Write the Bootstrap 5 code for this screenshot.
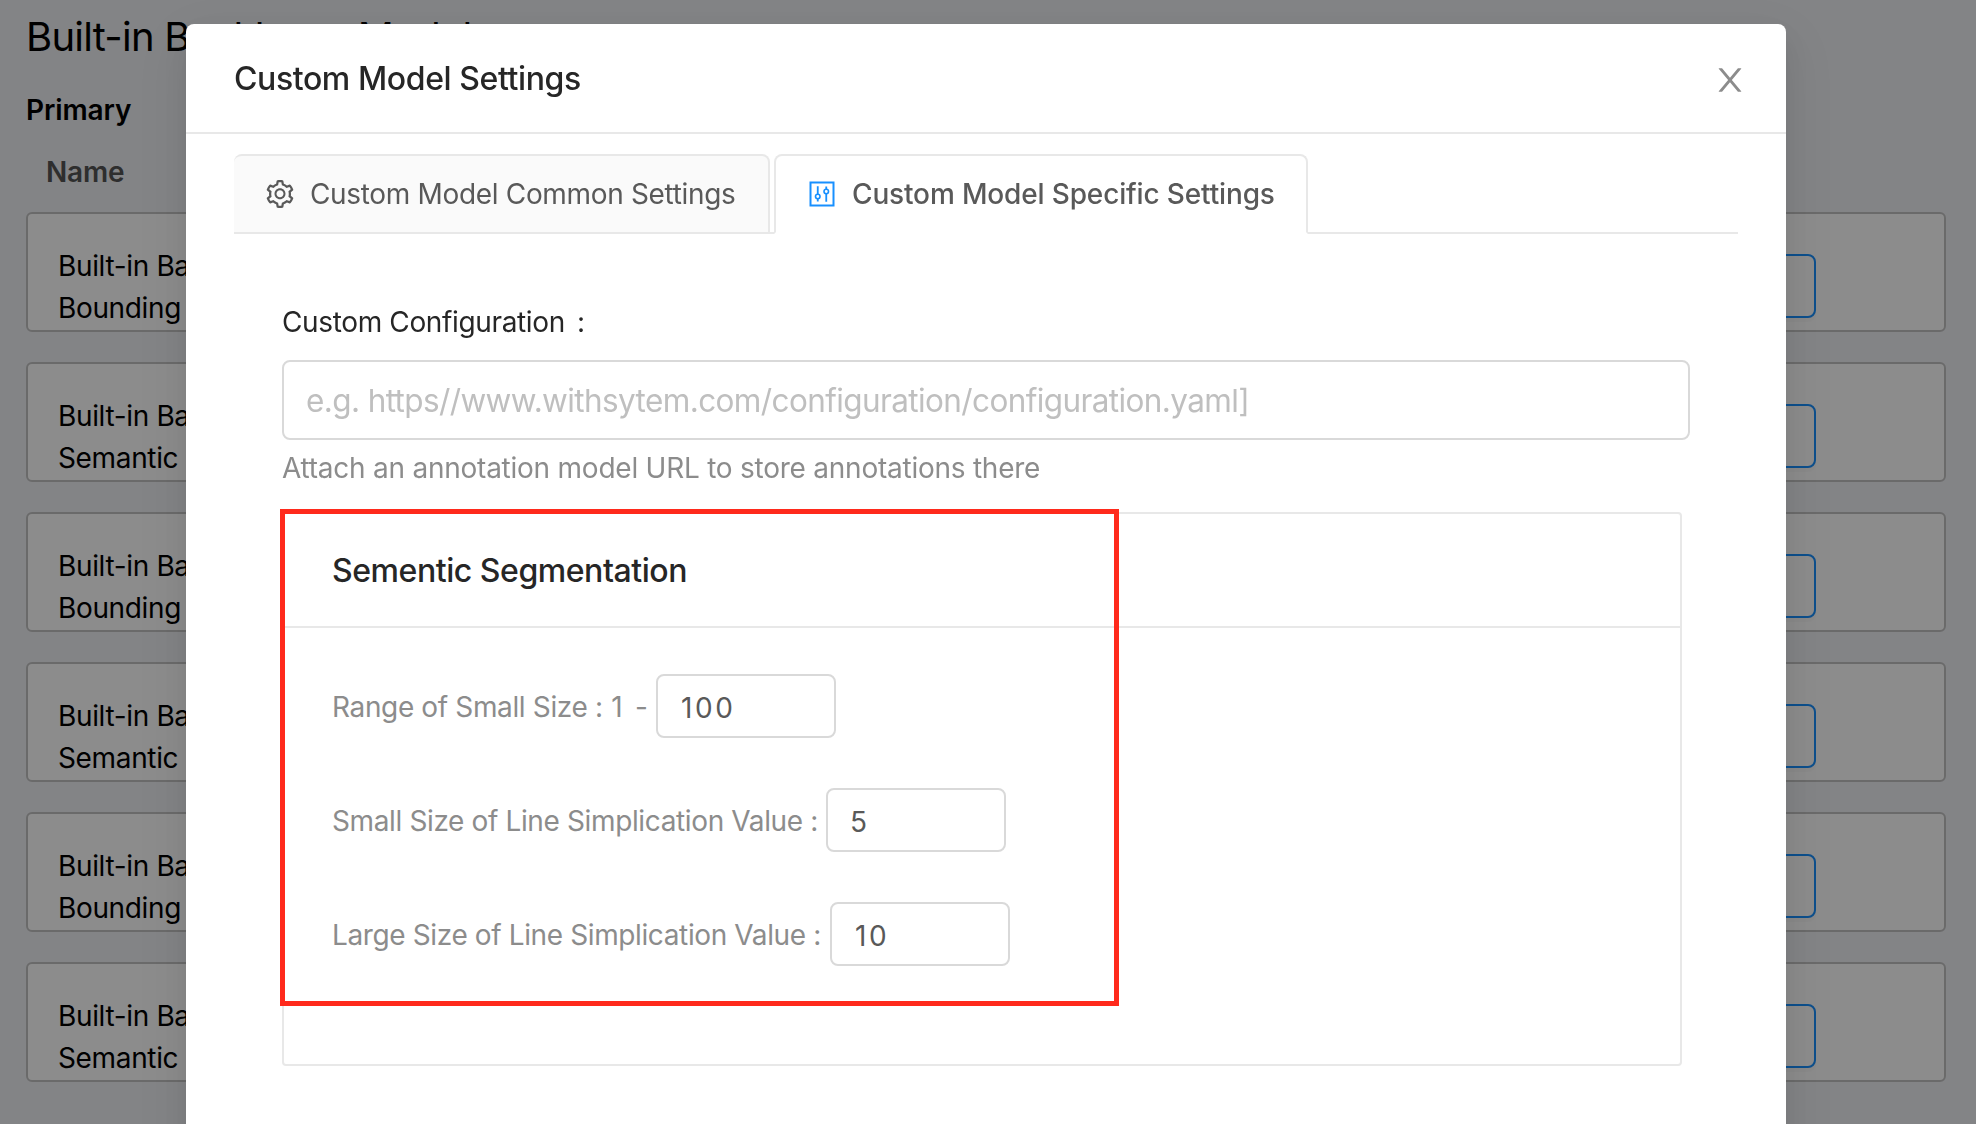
<!DOCTYPE html>
<html lang="en">
<head>
<meta charset="utf-8">
<meta name="viewport" content="width=device-width, initial-scale=1">
<title>Custom Model Settings</title>
<link href="https://cdn.jsdelivr.net/npm/bootstrap@5.3.0/dist/css/bootstrap.min.css" rel="stylesheet">
<style>
  html, body { height: 100%; overflow: hidden; }
  body { font-family: Inter, "Liberation Sans", sans-serif; font-size: 28px; line-height: 42px; color: #000; background: #eef0f4; }

  /* Page behind the dialog */
  .page { padding: 7px 30px 0 26px; }
  .page-title { font-size: 40px; line-height: 60px; font-weight: 400; letter-spacing: -.75px; margin: 0 0 22px; }
  .page-group { font-size: 28px; line-height: 42px; font-weight: 600; letter-spacing: -.1px; margin: 0 0 20px; }
  .page-head { font-weight: 600; color: #555; padding-left: 20px; margin-bottom: 19px; letter-spacing: -.2px; }
  .model-row { height: 120px; border: 2px solid #c2c2c2; border-radius: 6px; margin-bottom: 30px; padding: 31px 128px 0 30px; line-height: 42px; background: #fff; }
  .model-name { width: 330px; letter-spacing: -.35px; }
  .model-row .btn { width: 180px; height: 64px; margin-top: 9px; border: 2px solid #1890ff; border-radius: 8px; background: #fff; box-shadow: 0 4px 0 rgba(0,0,0,.02); }

  /* Dialog */
  .modal-backdrop { --bs-backdrop-opacity: .45; }
  .modal { padding-right: 4px; overflow: hidden; }
  .modal-dialog { max-width: 1600px; margin: 24px auto 0; }
  .modal-content { height: 1200px; border: 0; border-radius: 8px; color: #262626; box-shadow: 0 6px 12px -8px rgba(0,0,0,.12), 0 12px 32px rgba(0,0,0,.08), 0 18px 56px 16px rgba(0,0,0,.05); }
  .modal-header { height: 110px; padding: 4px 40px 0 48px; border-bottom: 2px solid #e8e8e8; }
  .modal-title { margin-bottom: 2px; font-size: 32px; line-height: 48px; font-weight: 500; letter-spacing: -.4px; }
  .close-x { display: flex; padding: 0; border: 0; background: none; color: #8c8c8c; }
  .modal-body { padding: 20px 48px 0; }

  .nav-tabs { height: 80px; gap: 4px; border-bottom: 2px solid #e8e8e8; }
  .nav-tabs .nav-link { height: 80px; gap: 16px; padding: 0 0 0 32px; border: 2px solid #e8e8e8; border-radius: 8px 8px 0 0; margin-bottom: -2px; color: #595959; background: #fafafa; }
  .nav-tabs .tab-common { width: 536px; border-left: 0; letter-spacing: -.33px; }
  .nav-tabs .tab-specific, .nav-tabs .tab-specific.active { width: 534px; font-weight: 500; letter-spacing: -.15px; color: #595959; background: #fff; border-color: #e8e8e8 #e8e8e8 #fff; }
  .tab-specific svg { color: #1890ff; }

  .tab-pane-body { padding: 67px 48px 0; }
  .form-label { margin: 0 0 17px; letter-spacing: -.36px; }
  .form-control { border: 2px solid #d9d9d9; border-radius: 8px; color: #595959; }
  .url-field { height: 80px; padding: 0 22px; font-size: 31.5px; letter-spacing: -.61px; }
  .url-field::placeholder { color: #bfbfbf; opacity: 1; }
  .form-text { margin: 7px 0 23px; font-size: 28px; color: #8c8c8c; letter-spacing: -.24px; }

  .seg-card { height: 554px; margin-right: 8px; border: 2px solid #e8e8e8; border-radius: 4px; background: #fff; }
  .seg-card .card-header { height: 114px; padding: 1px 48px 0; font-size: 32px; font-weight: 500; letter-spacing: -.45px; background: #fff; border-bottom: 2px solid #e8e8e8; }
  .seg-card .card-body { padding: 46px 48px 0; gap: 50px; color: #8c8c8c; }
  .field-row { gap: 7px; }
  .field-row label { padding-top: 2px; }
  .field-row .form-control { width: 180px; height: 64px; padding: 4px 22px 0; font-size: 28px; letter-spacing: .9px; }
  .field-row .wide-num { padding-left: 23px; letter-spacing: 2.6px; }
  .lbl-range { width: 317px; letter-spacing: -.36px; }
  .range-from { padding-left: 1px; letter-spacing: 2.2px; }
  .lbl-small { width: 487px; letter-spacing: -.37px; }
  .lbl-large { width: 491px; letter-spacing: -.38px; }
  .highlight { position: absolute; left: -4px; top: -5px; width: 839px; height: 497px; border: 5px solid #ff2a1c; pointer-events: none; }
</style>
</head>
<body>
<main class="page">
  <h1 class="page-title">Built-in Backbone Models</h1>
  <h2 class="page-group">Primary</h2>
  <div class="page-head">Name</div>
  <div class="model-row d-flex justify-content-between"><div class="model-name">Built-in Backbone<br>Bounding Box</div><button class="btn" type="button" aria-label="Settings"></button></div>
  <div class="model-row d-flex justify-content-between"><div class="model-name">Built-in Backbone<br>Semantic</div><button class="btn" type="button" aria-label="Settings"></button></div>
  <div class="model-row d-flex justify-content-between"><div class="model-name">Built-in Backbone<br>Bounding Box</div><button class="btn" type="button" aria-label="Settings"></button></div>
  <div class="model-row d-flex justify-content-between"><div class="model-name">Built-in Backbone<br>Semantic</div><button class="btn" type="button" aria-label="Settings"></button></div>
  <div class="model-row d-flex justify-content-between"><div class="model-name">Built-in Backbone<br>Bounding Box</div><button class="btn" type="button" aria-label="Settings"></button></div>
  <div class="model-row d-flex justify-content-between"><div class="model-name">Built-in Backbone<br>Semantic</div><button class="btn" type="button" aria-label="Settings"></button></div>
</main>

<div class="modal-backdrop show"></div>
<div class="modal show d-block" tabindex="-1" role="dialog" aria-labelledby="dlgTitle">
  <div class="modal-dialog">
    <div class="modal-content">
      <div class="modal-header d-flex align-items-center justify-content-between">
        <h5 class="modal-title" id="dlgTitle">Custom Model Settings</h5>
        <button class="close-x" type="button" aria-label="Close">
          <svg width="32" height="32" viewBox="64 64 896 896" fill="currentColor"><path d="M563.8 512l262.5-312.9c4.4-5.2.7-13.1-6.1-13.1h-79.8c-4.7 0-9.2 2.1-12.3 5.7L511.6 449.8 295.1 191.7c-3-3.6-7.5-5.7-12.3-5.7H203c-6.8 0-10.5 7.9-6.1 13.1L459.4 512 196.9 824.9A7.95 7.95 0 0 0 203 838h79.8c4.7 0 9.2-2.1 12.3-5.7l216.5-258.1 216.5 258.1c3 3.6 7.5 5.7 12.3 5.7h79.8c6.8 0 10.5-7.9 6.1-13.1L563.8 512z"/></svg>
        </button>
      </div>
      <div class="modal-body">
        <ul class="nav nav-tabs">
          <li class="nav-item">
            <button class="nav-link tab-common d-flex align-items-center" type="button">
              <svg width="28" height="28" viewBox="64 64 896 896" fill="currentColor"><path d="M924.8 625.7l-65.5-56c3.1-19 4.7-38.4 4.7-57.8s-1.6-38.8-4.7-57.8l65.5-56a32.03 32.03 0 0 0 9.3-35.2l-.9-2.6a443.74 443.74 0 0 0-79.7-137.9l-1.8-2.1a32.12 32.12 0 0 0-35.1-9.5l-81.3 28.9c-30-24.6-63.5-44-99.7-57.6l-15.7-85a32.05 32.05 0 0 0-25.8-25.7l-2.7-.5c-52.1-9.4-106.9-9.4-159 0l-2.7.5a32.05 32.05 0 0 0-25.8 25.7l-15.8 85.4a351.86 351.86 0 0 0-99 57.4l-81.9-29.1a32 32 0 0 0-35.1 9.5l-1.8 2.1a446.02 446.02 0 0 0-79.7 137.9l-.9 2.6c-4.5 12.5-.8 26.5 9.3 35.2l66.3 56.6c-3.1 18.8-4.6 38-4.6 57.1 0 19.2 1.5 38.4 4.6 57.1L99 625.5a32.03 32.03 0 0 0-9.3 35.2l.9 2.6c18.1 50.4 44.9 96.9 79.7 137.9l1.8 2.1a32.12 32.12 0 0 0 35.1 9.5l81.9-29.1c29.8 24.5 63.1 43.9 99 57.4l15.8 85.4a32.05 32.05 0 0 0 25.8 25.7l2.7.5a449.4 449.4 0 0 0 159 0l2.7-.5a32.05 32.05 0 0 0 25.8-25.7l15.7-85a350 350 0 0 0 99.7-57.6l81.3 28.9a32 32 0 0 0 35.1-9.5l1.8-2.1c34.8-41.1 61.6-87.5 79.7-137.9l.9-2.6c4.5-12.3.8-26.3-9.3-35zM788.3 465.9c2.5 15.1 3.8 30.6 3.8 46.1s-1.3 31-3.8 46.1l-6.6 40.1 74.7 63.9a370.03 370.03 0 0 1-42.6 73.6L721 702.8l-31.4 25.8c-23.9 19.6-50.5 35-79.3 45.8l-38.1 14.3-17.9 97a377.5 377.5 0 0 1-85 0l-17.9-97.2-37.8-14.5c-28.5-10.8-55-26.2-78.7-45.7l-31.4-25.9-93.4 33.2c-17-22.9-31.2-47.6-42.6-73.6l75.5-64.5-6.5-40c-2.4-14.9-3.7-30.3-3.7-45.5 0-15.3 1.2-30.6 3.7-45.5l6.5-40-75.5-64.5c11.3-26.1 25.6-50.7 42.6-73.6l93.4 33.2 31.4-25.9c23.7-19.5 50.2-34.9 78.7-45.7l37.9-14.3 17.9-97.2c28.1-3.2 56.8-3.2 85 0l17.9 97 38.1 14.3c28.7 10.8 55.4 26.2 79.3 45.8l31.4 25.8 92.8-32.9c17 22.9 31.2 47.6 42.6 73.6L781.8 426l6.5 39.9zM512 326c-97.2 0-176 78.8-176 176s78.8 176 176 176 176-78.8 176-176-78.8-176-176-176zm79.2 255.2A111.6 111.6 0 0 1 512 614c-29.9 0-58-11.7-79.2-32.8A111.6 111.6 0 0 1 400 502c0-29.9 11.7-58 32.8-79.2C454 401.6 482.1 390 512 390c29.9 0 58 11.6 79.2 32.8A111.6 111.6 0 0 1 624 502c0 29.9-11.7 58-32.8 79.2z"/></svg>
              <span>Custom Model Common Settings</span>
            </button>
          </li>
          <li class="nav-item">
            <button class="nav-link tab-specific active d-flex align-items-center" type="button">
              <svg width="28" height="28" viewBox="64 64 896 896" fill="none" stroke="currentColor" stroke-width="64"><rect x="144" y="144" width="736" height="736"/><path d="M376 264v256M376 660v90M648 274v90M648 500v260" stroke-width="58"/><circle cx="376" cy="590" r="72" stroke-width="52"/><circle cx="648" cy="432" r="72" stroke-width="52"/></svg>
              <span>Custom Model Specific Settings</span>
            </button>
          </li>
        </ul>
        <div class="tab-pane-body">
          <label class="form-label d-block" for="cfg">Custom Configuration<span class="ms-2 ps-1">:</span></label>
          <input class="form-control url-field" id="cfg" type="text" placeholder="e.g. https//www.withsytem.com/configuration/configuration.yaml]">
          <div class="form-text">Attach an annotation model URL to store annotations there</div>
          <div class="card seg-card">
            <div class="card-header d-flex align-items-center">Sementic Segmentation</div>
            <div class="card-body d-flex flex-column">
              <div class="field-row d-flex align-items-center"><label class="lbl-range text-nowrap" for="f1">Range of Small Size : <span class="range-from">1 -</span></label><input class="form-control wide-num" id="f1" type="text" value="100"></div>
              <div class="field-row d-flex align-items-center"><label class="lbl-small text-nowrap" for="f2">Small Size of Line Simplication Value :</label><input class="form-control" id="f2" type="text" value="5"></div>
              <div class="field-row d-flex align-items-center"><label class="lbl-large text-nowrap" for="f3">Large Size of Line Simplication Value :</label><input class="form-control wide-num" id="f3" type="text" value="10"></div>
            </div>
            <div class="highlight"></div>
          </div>
        </div>
      </div>
    </div>
  </div>
</div>
<script src="https://cdn.jsdelivr.net/npm/bootstrap@5.3.0/dist/js/bootstrap.bundle.min.js"></script>
</body>
</html>
